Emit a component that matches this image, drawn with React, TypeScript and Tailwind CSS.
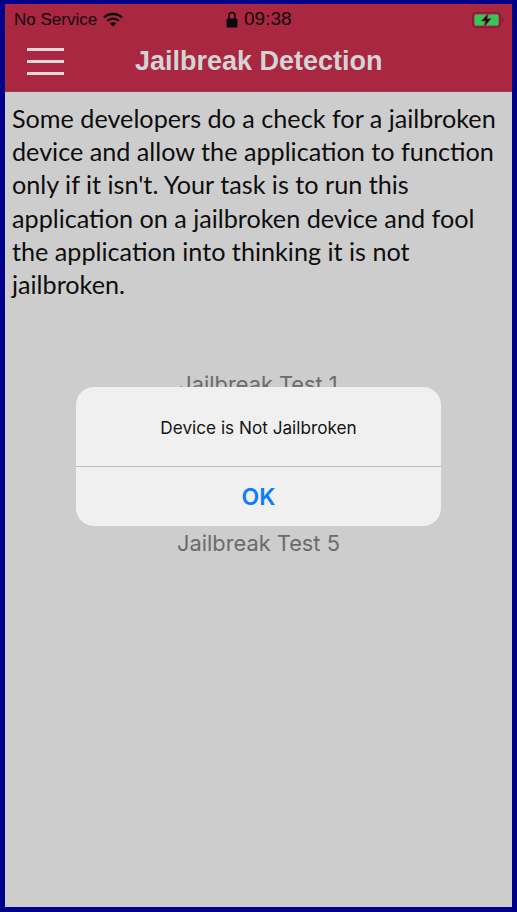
const sans = "font-['Liberation_Sans',Arial,sans-serif]";

function Wifi() {
  return (
    <svg width="20" height="15" viewBox="0 0 20 15" className="ml-[6px]">
      <path d="M1 5.5C6 .8 14 .8 19 5.5" fill="none" stroke="#0a0a0a" strokeWidth="2.3" />
      <path d="M4.2 8.8C7.5 5.8 12.5 5.8 15.8 8.8" fill="none" stroke="#0a0a0a" strokeWidth="2.3" />
      <path d="M10 14.5L6.8 11.4C8.6 9.9 11.4 9.9 13.2 11.4Z" fill="#0a0a0a" />
    </svg>
  );
}

function Lock() {
  return (
    <svg width="12" height="17" viewBox="0 0 12 17">
      <path d="M3 8V4.500a3 3 0 0 1 6 0V8" fill="none" stroke="#0a0a0a" strokeWidth="1.6" />
      <rect x="0.5" y="7.500" width="11" height="9" rx="1.5" fill="#0a0a0a" />
    </svg>
  );
}

function Battery() {
  return (
    <svg width="32" height="16" viewBox="0 0 32 16">
      <rect x="0.7" y="0.7" width="27.6" height="14.6" rx="3.5" fill="none" stroke="#7c1c30" strokeWidth="1.3" />
      <rect x="2.5" y="2.5" width="24" height="11" rx="1.5" fill="#35c759" />
      <path d="M30 5.5c1 .4 1.5 1.400 1.500 2.500s-.5 2.100-1.500 2.500Z" fill="#7c1c30" />
      <path d="M16.500 1L9.500 9h4l-1.500 6 7-8.200h-4Z" fill="#0a0a0a" stroke="#a92741" strokeWidth="0.8" />
    </svg>
  );
}

export default function App() {
  return (
    <div className="relative flex h-[912px] w-[517px] flex-col border-[5px] border-t-[4px] border-[#00008b] bg-[#cdcdcd]">
      <header className="flex h-[88px] shrink-0 flex-col border-b border-[#9d3a50] bg-[#a92741]">
        <div className={`${sans} relative flex h-[31px] items-center px-[9px] text-[17px] text-[#12060a]`}>
          <span>No Service</span>
          <Wifi />
          <div className="absolute left-[221px] top-[1px] flex items-center gap-[6px]">
            <Lock />
            <span className="text-[19px] font-medium">09:38</span>
          </div>
          <div className="ml-auto mr-[-1px]">
            <Battery />
          </div>
        </div>
        <div className="flex items-start">
          <div className="ml-[22px] mt-[13px] flex w-[37px] flex-col gap-[9px]">
            <div className="h-[3px] bg-[#d9d9d9]" />
            <div className="h-[3px] bg-[#d9d9d9]" />
            <div className="h-[3px] bg-[#d9d9d9]" />
          </div>
          <h1 className={`${sans} ml-[71px] mt-[7px] text-[27px] font-bold leading-[38px] text-[#d4d4d4]`}>
            Jailbreak Detection
          </h1>
        </div>
      </header>
      <main className="flex flex-1 flex-col">
        <p className="pl-[7px] pr-[8px] pt-[10px] font-['Lato',sans-serif] text-[25.200px] leading-[33.2px] text-[#0d0d0d]">
          Some developers do a check for a jailbroken device and allow the application to function only if it isn't. Your task is to run this application on a jailbroken device and fool the application into thinking it is not jailbroken.
        </p>
        <ul className="mt-[69px] flex flex-col items-center gap-[11.800px] font-['Inter',sans-serif] text-[21.800px] leading-[28px] text-[#6b6b6b]">
          <li>Jailbreak Test 1</li>
          <li>Jailbreak Test 2</li>
          <li>Jailbreak Test 3</li>
          <li>Jailbreak Test 4</li>
          <li>Jailbreak Test 5</li>
        </ul>
      </main>
      <div className="absolute left-[71px] top-[383px] w-[365px] overflow-hidden rounded-[18px] bg-[#f0f0f0] font-['Inter',sans-serif]">
        <div className="flex h-[80px] items-center justify-center border-b border-[#bdbdbd] pt-[3px] text-[17.200px] text-[#141414]">
          Device is Not Jailbroken
        </div>
        <div className="flex h-[59px] items-center justify-center pt-[1px] text-[23px] font-semibold text-[#0a7cff]">
          OK
        </div>
      </div>
    </div>
  );
}
